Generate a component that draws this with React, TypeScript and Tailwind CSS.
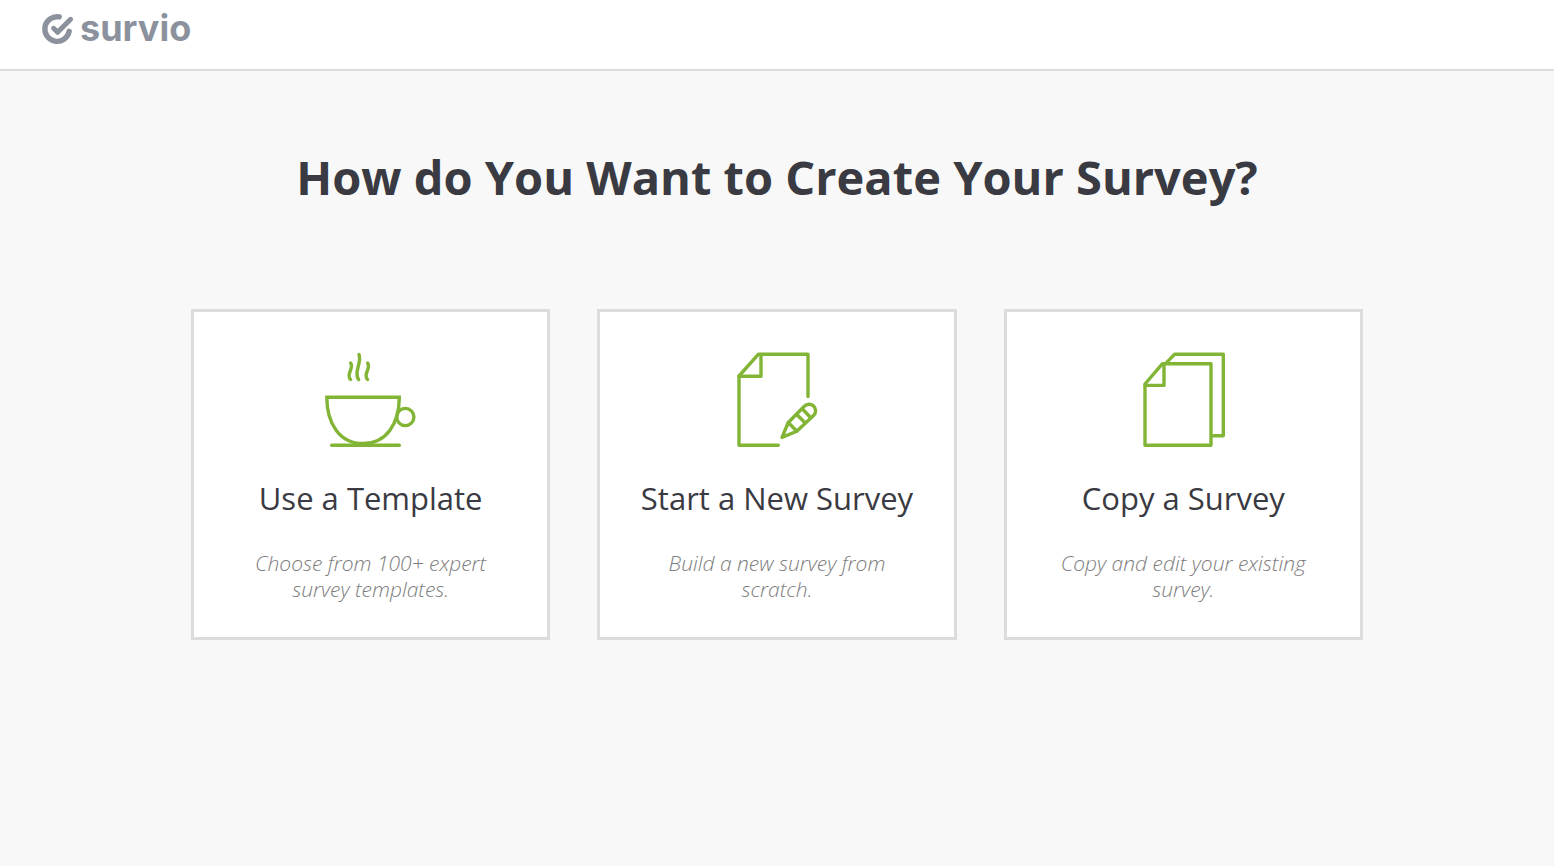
import type { ReactNode } from 'react';

type Option = {
  title: string;
  description: string;
  icon: ReactNode;
};

const options: Option[] = [
  {
    title: 'Use a Template',
    description: 'Choose from 100+ expert survey templates.',
    icon: <CupIcon />,
  },
  {
    title: 'Start a New Survey',
    description: 'Build a new survey from scratch.',
    icon: <NewPageIcon />,
  },
  {
    title: 'Copy a Survey',
    description: 'Copy and edit your existing survey.',
    icon: <CopyIcon />,
  },
];

export default function App() {
  return (
    <div className="min-h-screen bg-[#f8f8f8] font-['Open_Sans',sans-serif] text-[#3a3a42]">
      <header className="flex border-b-2 border-[#dcdcdc] bg-white px-10 pt-1 pb-4">
        <a href="#" className="flex items-center gap-1 text-[#8b929d]">
          <LogoMark />
          <span className="font-[Inter,sans-serif] text-4xl leading-[49px] font-bold">survio</span>
        </a>
      </header>

      <main className="px-6 pt-[73px] pb-16">
        <h1 className="text-center text-[47px] leading-[66px] font-bold">
          How do You Want to Create Your Survey?
        </h1>
        <div className="mx-auto mt-[99px] grid max-w-[1172px] grid-cols-1 gap-[47px] md:grid-cols-3">
          {options.map((option) => (
            <a
              key={option.title}
              href="#"
              className="flex flex-col items-center border-3 border-[#dcdcdc] bg-white px-9 pt-10 pb-[35px] text-center"
            >
              {option.icon}
              <h2 className="mt-[29px] text-[31px] leading-[44px] whitespace-nowrap">{option.title}</h2>
              <p className="mt-[30px] px-4 text-[21px] leading-[26px] font-light text-[#7d7d7d] italic">
                {option.description}
              </p>
            </a>
          ))}
        </div>
      </main>
    </div>
  );
}

function LogoMark() {
  return (
    <svg width="36" height="36" viewBox="0 0 36 36" fill="none" aria-hidden="true">
      <g stroke="currentColor" strokeWidth="5.4" strokeLinecap="round" strokeLinejoin="round">
        <path d="M19.2 5.9A12.3 12.3 0 1 0 29.2 20.3" />
        <path d="M13.6 17.3L17.6 21.3L30.6 8.3" strokeWidth="5" />
      </g>
    </svg>
  );
}

function CupIcon() {
  return (
    <svg width="95" height="95" viewBox="13 12 95 95" fill="none" aria-hidden="true">
      <g stroke="#82b536" strokeWidth="3.4" strokeLinecap="round">
        <path d="M49 14.6c2.4 6-1.8 12-2 18.5c-.1 3 .3 5 1.7 6.5" />
        <path d="M40.6 23c3 4-1.5 8-1.5 12.5c0 2 .2 3 1.5 4" />
        <path d="M57.6 23c3 4-1.5 8-1.5 12.5c0 2 .2 3 1.5 4" />
        <path d="M16.8 57.3H89.3C89.3 84 76 103.5 53 103.5S16.8 84 16.8 57.3Z" />
        <circle cx="95.3" cy="77" r="8.6" />
        <path d="M21.7 105.3H89.3" />
      </g>
    </svg>
  );
}

function NewPageIcon() {
  return (
    <svg width="95" height="95" viewBox="9 12 95 95" fill="none" aria-hidden="true">
      <g stroke="#82b536" strokeWidth="3.4" strokeLinecap="round" strokeLinejoin="round">
        <path d="M58.3 105.2H19V36L38.5 14.2H88V56.5" />
        <path d="M41 14.5V36.2H19" />
        <path d="M62 97.4L68.3 82.5L84.3 66.3A6.4 6.4 0 0 1 93.8 75.3L76.8 91.2Z" />
        <path d="M68.3 82.5L76.8 91.2M76.5 74.3L85.3 83M82.5 69L90.5 77.5" />
      </g>
    </svg>
  );
}

function CopyIcon() {
  return (
    <svg width="95" height="95" viewBox="10 12 95 95" fill="none" aria-hidden="true">
      <g stroke="#82b536" strokeWidth="3.4" strokeLinecap="round" strokeLinejoin="round">
        <path d="M19 105.3V44L36.5 23.7H85V105.3Z" />
        <path d="M38 24V45.4H19" />
        <path d="M40.5 22.7L48.5 14.3H97.3V95.7H86" />
      </g>
    </svg>
  );
}
